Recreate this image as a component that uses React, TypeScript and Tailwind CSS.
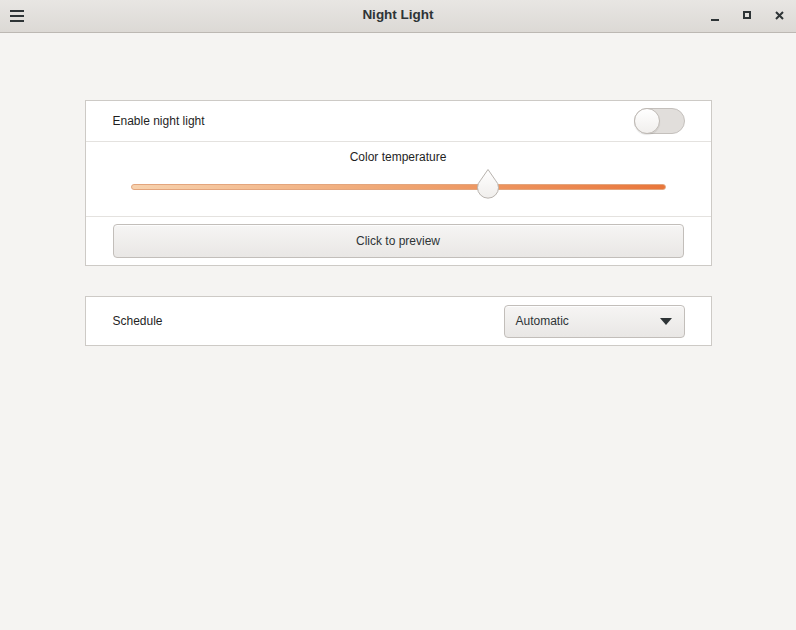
import React from 'react'

const font = { fontFamily: '"Liberation Sans", Arial, sans-serif' }

function Toggle() {
  return (
    <div className="relative w-[51px] h-[26px] rounded-full bg-[#e1dedb] border border-[#c4c0bc]">
      <div className="absolute -left-px -top-px w-[26px] h-[26px] rounded-full border border-[#bfbab5] bg-gradient-to-b from-white to-[#f1efed] shadow-[0_1px_1px_rgba(0,0,0,0.1)]" />
    </div>
  )
}

function Slider({ value }: { value: number }) {
  return (
    <div className="relative h-[30px] mx-[45px]">
      <div className="absolute left-0 right-0 top-[12px] h-[6px] rounded-full border border-[#e3a57d] bg-gradient-to-r from-[#f7d2ae] via-[#efa572] to-[#e9763a]" />
      <div
        className="absolute top-[-4px] w-[24px] h-[31px] -ml-[12px]"
        style={{ left: `${value}%` }}
      >
        <svg width="24" height="31" viewBox="0 0 24 31">
          <defs>
            <linearGradient id="thumb" x1="0" y1="0" x2="0" y2="1">
              <stop offset="0" stopColor="#ffffff" />
              <stop offset="1" stopColor="#f0eeec" />
            </linearGradient>
          </defs>
          <path
            d="M12 1.5 L19.4 12.2 A10.5 10.5 0 1 1 4.6 12.2 Z"
            fill="url(#thumb)"
            stroke="#b8b3ae"
            strokeWidth="1"
          />
        </svg>
      </div>
    </div>
  )
}

function GtkButton({ children, className = '' }: { children: React.ReactNode; className?: string }) {
  return (
    <div
      className={`flex items-center rounded-[4px] border border-[#c2beba] bg-gradient-to-b from-[#f6f5f4] to-[#e9e7e5] shadow-[0_1px_0_rgba(255,255,255,0.8)_inset] text-[12px] text-[#2e3436] ${className}`}
    >
      {children}
    </div>
  )
}

export default function App() {
  return (
    <div className="w-[796px] h-[630px] bg-[#f5f4f2] flex flex-col" style={font}>
      {/* Header bar */}
      <div className="h-[33px] shrink-0 grid grid-cols-[1fr_auto_1fr] items-center border-b border-[#bcb8b3] bg-gradient-to-b from-[#e8e6e3] to-[#dcd9d5]">
        <div className="w-[34px] flex justify-center">
          <div className="flex flex-col gap-[3px] w-[14px]">
            <div className="h-[2px] bg-[#2e3436]" />
            <div className="h-[2px] bg-[#2e3436]" />
            <div className="h-[2px] bg-[#2e3436]" />
          </div>
        </div>
        <div className="text-center text-[13.5px] font-bold text-[#2e3436] -mt-[2px]">Night Light</div>
        <div className="flex items-center justify-end gap-[24px] pr-[12px] -mt-[2px]">
          <div className="w-[8px] h-[8px] flex items-end">
            <div className="w-[8px] h-[2px] bg-[#2e3436] translate-y-[2px]" />
          </div>
          <div className="w-[8px] h-[8px] border-[2px] border-[#2e3436]" />
          <svg width="9" height="9" viewBox="0 0 9 9">
            <path d="M1 1 L8 8 M8 1 L1 8" stroke="#2e3436" strokeWidth="2" />
          </svg>
        </div>
      </div>

      {/* Content */}
      <div className="w-[627px] mx-auto mt-[67px] flex flex-col gap-[30px]">
        <div className="bg-white border border-[#cdcac6]">
          <div className="h-[41px] flex items-center justify-between pl-[27px] pr-[26px] border-b border-[#e4e2df]">
            <span className="text-[12px] text-[#1f1f1f]">Enable night light</span>
            <Toggle />
          </div>
          <div className="h-[75px] border-b border-[#e4e2df] pt-[6px]">
            <div className="text-center text-[12px] text-[#1f1f1f] mb-[6px]">Color temperature</div>
            <Slider value={66.8} />
          </div>
          <div className="h-[48px] px-[27px] pt-[7px]">
            <GtkButton className="h-[34px] justify-center">Click to preview</GtkButton>
          </div>
        </div>

        <div className="bg-white border border-[#cdcac6] h-[50px] flex items-center justify-between pl-[27px] pr-[26px]">
          <span className="text-[12px] text-[#1f1f1f]">Schedule</span>
          <GtkButton className="w-[181px] h-[33px] justify-between pl-[11px] pr-[12px]">
            <span>Automatic</span>
            <svg width="12" height="7" viewBox="0 0 12 7">
              <path d="M0 0 H12 L6 7 Z" fill="#2e3436" />
            </svg>
          </GtkButton>
        </div>
      </div>
    </div>
  )
}
